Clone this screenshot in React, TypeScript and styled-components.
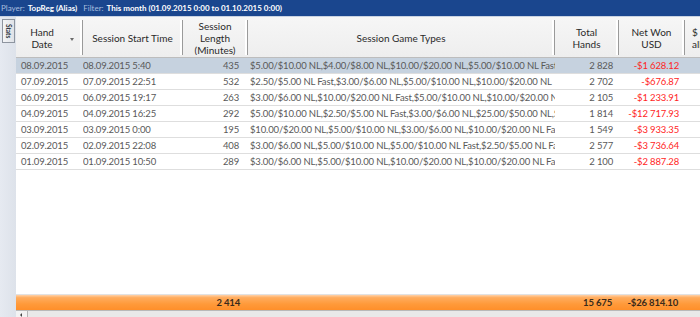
import React from 'react'
import styled, { createGlobalStyle } from 'styled-components'

const GlobalStyle = createGlobalStyle`
  html, body {
    margin: 0;
    padding: 0;
    background: #ffffff;
  }
`

const COLUMNS = '67px 100px 65px 307px 64px 66px 1fr'

type Session = {
  date: string
  start: string
  length: string
  games: string
  hands: string
  won: string
}

const sessions: Session[] = [
  { date: '08.09.2015', start: '08.09.2015 5:40', length: '435', games: '$5.00/$10.00 NL,$4.00/$8.00 NL,$10.00/$20.00 NL,$5.00/$10.00 NL Fast,$3.00/$6.00 NL', hands: '2 828', won: '-$1 628.12' },
  { date: '07.09.2015', start: '07.09.2015 22:51', length: '532', games: '$2.50/$5.00 NL Fast,$3.00/$6.00 NL,$5.00/$10.00 NL,$10.00/$20.00 NL', hands: '2 702', won: '-$676.87' },
  { date: '06.09.2015', start: '06.09.2015 19:17', length: '263', games: '$3.00/$6.00 NL,$10.00/$20.00 NL Fast,$5.00/$10.00 NL,$10.00/$20.00 NL,$2.50/$5.00 NL', hands: '2 105', won: '-$1 233.91' },
  { date: '04.09.2015', start: '04.09.2015 16:25', length: '292', games: '$5.00/$10.00 NL,$2.50/$5.00 NL Fast,$3.00/$6.00 NL,$25.00/$50.00 NL,$5.00/$10.00 NL Fast', hands: '1 814', won: '-$12 717.93' },
  { date: '03.09.2015', start: '03.09.2015 0:00', length: '195', games: '$10.00/$20.00 NL,$5.00/$10.00 NL,$3.00/$6.00 NL,$10.00/$20.00 NL Fast', hands: '1 549', won: '-$3 933.35' },
  { date: '02.09.2015', start: '02.09.2015 22:08', length: '408', games: '$3.00/$6.00 NL,$5.00/$10.00 NL,$5.00/$10.00 NL Fast,$2.50/$5.00 NL Fast', hands: '2 577', won: '-$3 736.64' },
  { date: '01.09.2015', start: '01.09.2015 10:50', length: '289', games: '$3.00/$6.00 NL,$5.00/$10.00 NL,$10.00/$20.00 NL,$10.00/$20.00 NL Fast,$5.00/$10.00 NL', hands: '2 100', won: '-$2 887.28' },
]

const App = () => {
  return (
    <>
      <GlobalStyle />
      <Window>
        <FilterBar>
          <Label>Player:</Label>
          <Value>TopReg (Alias)</Value>
          <Label className='gap'>Filter:</Label>
          <Value>This month (01.09.2015 0:00 to 01.10.2015 0:00)</Value>
        </FilterBar>
        <Body>
          <SideRail>
            <StatsTab>Stats</StatsTab>
          </SideRail>
          <Grid>
            <HeaderRow>
              <HeaderCell $sorted>
                <span>Hand<br />Date</span>
                <SortArrow />
              </HeaderCell>
              <HeaderCell>Session Start Time</HeaderCell>
              <HeaderCell>Session<br />Length<br />(Minutes)</HeaderCell>
              <HeaderCell>Session Game Types</HeaderCell>
              <HeaderCell>Total<br />Hands</HeaderCell>
              <HeaderCell>Net Won<br />USD</HeaderCell>
              <HeaderCell $clipped>$ Won<br />all-in adj</HeaderCell>
            </HeaderRow>
            <Rows>
              {sessions.map((s, i) => (
                <DataRow key={s.date} $selected={i === 0}>
                  <Cell $pad='0 0 0 5px'>{s.date}</Cell>
                  <Cell $pad='0 0 0 0'>{s.start}</Cell>
                  <Cell $align='right' $pad='0 9px 0 0'>{s.length}</Cell>
                  <Cell $pad='0 3px 0 2px'>{s.games}</Cell>
                  <Cell $align='right' $pad='0 6px 0 0'>{s.hands}</Cell>
                  <Cell $align='right' $pad='0 6px 0 0' $negative>{s.won}</Cell>
                  <Cell />
                </DataRow>
              ))}
            </Rows>
            <TotalRow>
              <Cell />
              <Cell />
              <Cell $align='right' $pad='0 8px 0 0'>2 414</Cell>
              <Cell />
              <Cell $align='right' $pad='0 7px 0 0'>15 675</Cell>
              <Cell $align='right' $pad='0 7px 0 0'>-$26 814.10</Cell>
              <Cell />
            </TotalRow>
            <ScrollBar>
              <ScrollButton />
            </ScrollBar>
          </Grid>
        </Body>
      </Window>
    </>
  )
}

export default App

const Window = styled.div`
  display: flex;
  flex-direction: column;
  width: 700px;
  height: 317px;
  overflow: hidden;

  font-family: Lato, 'Open Sans', sans-serif;
  background-color: #ffffff;
`

const FilterBar = styled.div`
  display: flex;
  align-items: center;
  height: 16px;
  padding-left: 1px;
  border-bottom: 1px solid #c9d3e2;

  font-size: 8px;
  white-space: nowrap;

  background-color: #1a468e;

  .gap {
    margin-left: 6px;
  }
`

const Label = styled.span`
  margin-right: 3px;

  color: #a9bfdf;
`

const Value = styled.span`
  font-weight: 700;

  color: #ffffff;
`

const Body = styled.div`
  display: flex;
  flex: 1;
  min-height: 0;
`

const SideRail = styled.div`
  display: flex;
  flex-direction: column;
  align-items: center;
  width: 16px;
  padding-top: 2px;

  background: linear-gradient(to right, #e6eaf1, #dde2ea);
`

const StatsTab = styled.div`
  display: flex;
  align-items: center;
  justify-content: center;
  width: 11px;
  height: 22px;
  border: 1px solid #8e959f;

  font-size: 6.5px;
  font-weight: 700;
  writing-mode: vertical-rl;

  color: #333a44;
  background: linear-gradient(to right, #f4f5f7, #dfe2e7);
`

const Grid = styled.div`
  display: flex;
  flex-direction: column;
  flex: 1;
  min-width: 0;
`

const HeaderRow = styled.div`
  display: grid;
  grid-template-columns: ${COLUMNS};
  height: 40px;
  border-bottom: 1px solid #bdbdbd;

  background: linear-gradient(to bottom, #f6f6f6, #eeeeee);
`

const HeaderCell = styled.div<{ $sorted?: boolean; $clipped?: boolean }>`
  position: relative;
  display: flex;
  align-items: center;
  justify-content: ${p => (p.$clipped ? 'flex-start' : 'center')};
  padding: ${p => (p.$sorted ? '0 14px 0 0' : p.$clipped ? '0 0 0 7px' : '0')};
  overflow: hidden;
  border-right: 1px solid #9a9a9a;
  box-shadow: inset -2px 0 0 #ffffff;
  margin: 3px 0 2px;

  font-size: 10px;
  line-height: 12px;
  text-align: ${p => (p.$clipped ? 'left' : 'center')};
  white-space: nowrap;

  color: #2a2a2a;

  &:last-child {
    border-right: none;
    box-shadow: none;
  }
`

const SortArrow = styled.span`
  position: absolute;
  right: 8px;
  top: 18px;
  width: 0;
  height: 0;
  border-left: 2.5px solid transparent;
  border-right: 2.5px solid transparent;
  border-top: 3px solid #6b6b6b;
`

const Rows = styled.div`
  display: flex;
  flex-direction: column;
  flex: 1;
`

const DataRow = styled.div<{ $selected?: boolean }>`
  display: grid;
  grid-template-columns: ${COLUMNS};
  align-items: center;
  height: 16px;
  box-sizing: border-box;
  border-bottom: 1px solid #dedede;

  font-size: 9.5px;
  letter-spacing: -0.15px;

  color: #595959;
  background-color: ${p => (p.$selected ? '#c6d2df' : '#ffffff')};
`

const Cell = styled.div<{ $align?: 'left' | 'right'; $pad?: string; $negative?: boolean }>`
  min-width: 0;
  padding: ${p => p.$pad ?? '0'};
  overflow: hidden;

  text-align: ${p => p.$align ?? 'left'};
  white-space: nowrap;

  color: ${p => (p.$negative ? '#ff2424' : 'inherit')};
`

const TotalRow = styled.div`
  display: grid;
  grid-template-columns: ${COLUMNS};
  align-items: center;
  height: 15px;
  border-top: 1px solid #e2e2e2;

  font-size: 9.5px;
  font-weight: 700;
  letter-spacing: -0.15px;

  color: #3a2a1a;
  background: linear-gradient(to bottom, #ffd1a8 0%, #ffac5e 18%, #ff9a3a 60%, #ff8f2a 100%);
`

const ScrollBar = styled.div`
  display: flex;
  height: 6px;
  border-top: 1px solid #b9b9b9;

  background-color: #e9e9e9;
`

const ScrollButton = styled.div`
  position: relative;
  width: 11px;
  height: 100%;
  border-right: 1px solid #b5b5b5;

  background-color: #f3f3f3;

  &::after {
    content: '';
    position: absolute;
    left: 4px;
    top: 2px;
    width: 0;
    height: 0;
    border-top: 2px solid transparent;
    border-bottom: 2px solid transparent;
    border-right: 2px solid #444444;
  }
`
